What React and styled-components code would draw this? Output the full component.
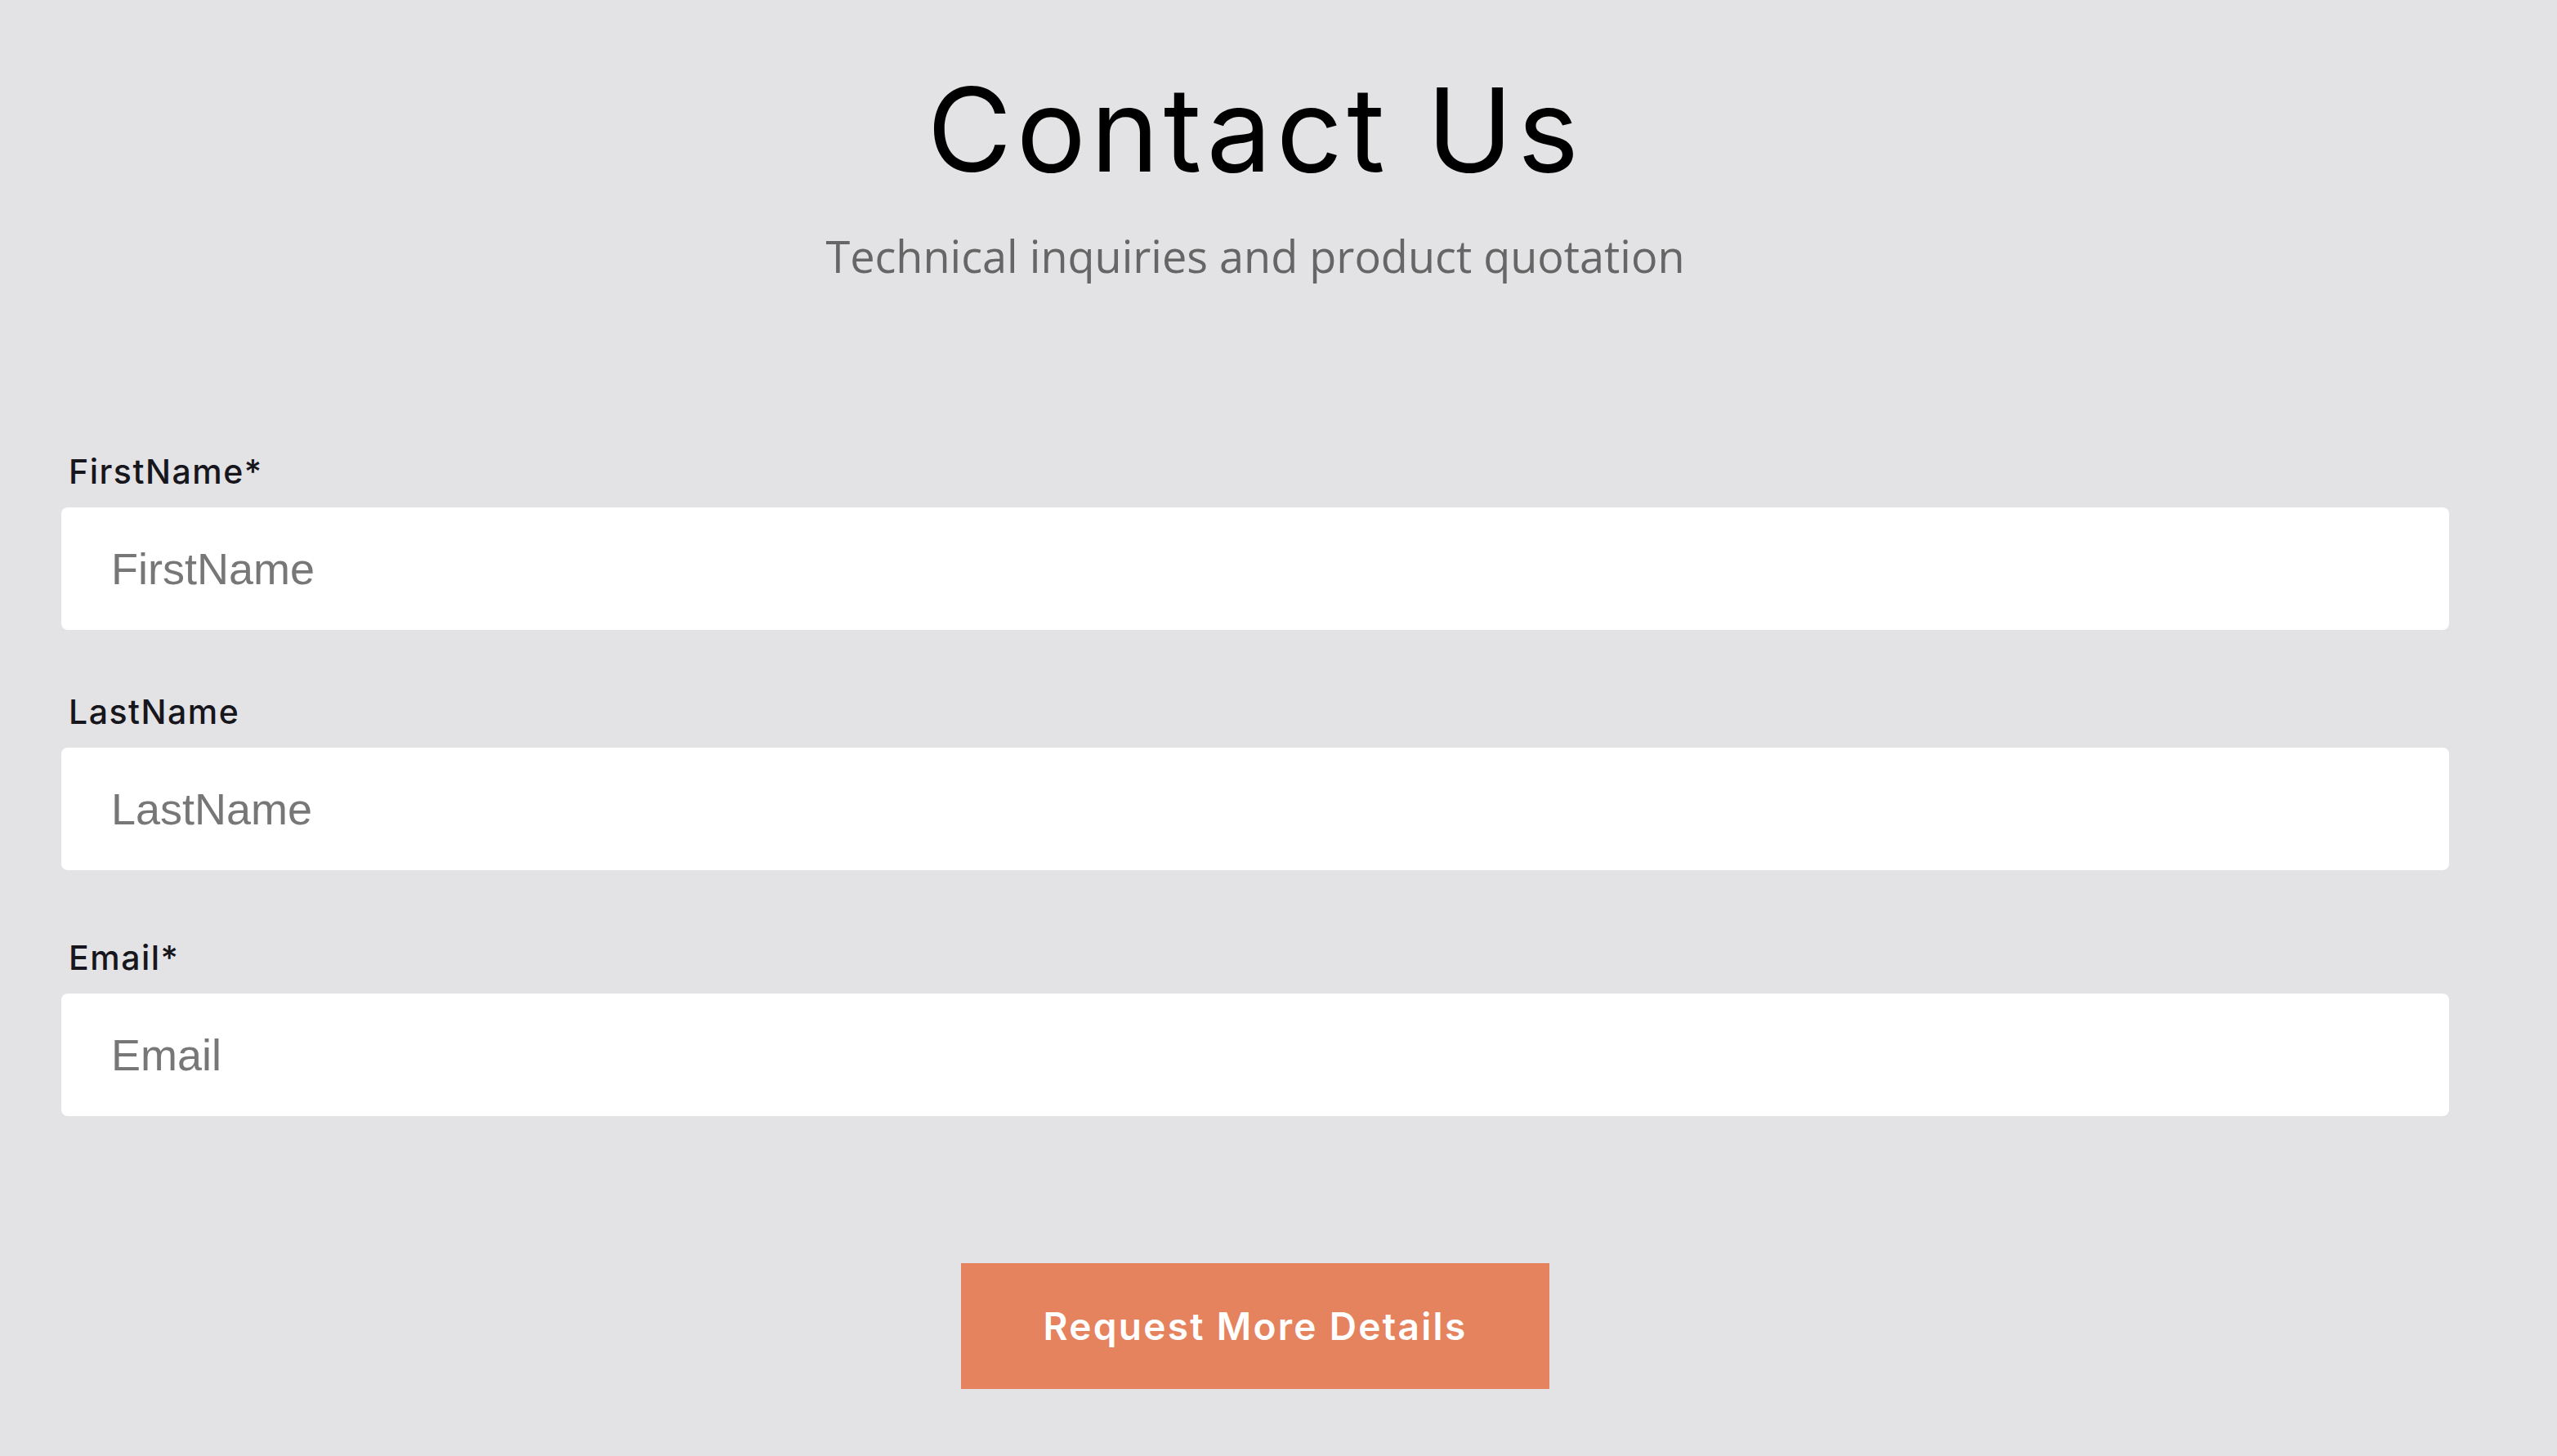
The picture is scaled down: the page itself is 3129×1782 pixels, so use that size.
import React from "react";
import styled, { createGlobalStyle } from "styled-components";

const Global = createGlobalStyle`
  html, body {
    margin: 0;
    padding: 0;
    background: #e3e3e5;
  }
  * {
    box-sizing: border-box;
  }
`;

const Page = styled.main`
  width: 3072px;
  min-height: 1782px;
  padding: 0 75px;
  background: #e3e3e5;
`;

const Header = styled.header`
  display: flex;
  flex-direction: column;
  align-items: center;
  padding-top: 78px;
`;

const Title = styled.h1`
  margin: 0;
  font-family: Inter, "Liberation Sans", sans-serif;
  font-weight: 400;
  font-size: 142px;
  line-height: 160px;
  letter-spacing: 5.5px;
  color: #000;
`;

const Subtitle = styled.p`
  margin: 48px 0 0;
  font-family: "Open Sans", sans-serif;
  font-size: 54px;
  line-height: 1;
  color: #666;
`;

const Form = styled.form`
  display: flex;
  flex-direction: column;
  margin-top: 215px;
`;

const Field = styled.div`
  display: flex;
  flex-direction: column;
  margin-bottom: ${(p) => p.$gap}px;
`;

const Label = styled.label`
  padding-left: 9px;
  margin-bottom: 22px;
  font-family: Inter, "Liberation Sans", sans-serif;
  font-weight: 500;
  font-size: 41px;
  line-height: 44px;
  letter-spacing: 1.5px;
  color: #16161c;
`;

const Input = styled.input`
  width: 100%;
  height: 150px;
  border: none;
  border-radius: 8px;
  background: #fff;
  padding: 0 0 0 61px;
  font-family: "Liberation Sans", Arial, sans-serif;
  font-size: 54px;
  color: #333;
  outline: none;
  &::placeholder {
    color: #777;
  }
`;

const Actions = styled.div`
  display: flex;
  justify-content: center;
  margin-top: 90px;
`;

const Button = styled.button`
  width: 720px;
  height: 154px;
  border: none;
  border-radius: 0;
  background: #e5835f;
  color: #fff;
  font-family: Inter, "Liberation Sans", sans-serif;
  font-weight: 600;
  font-size: 46px;
  letter-spacing: 2.3px;
  cursor: pointer;
`;

const fields = [
  { id: "firstname", label: "FirstName*", placeholder: "FirstName", type: "text", gap: 78 },
  { id: "lastname", label: "LastName", placeholder: "LastName", type: "text", gap: 85 },
  { id: "email", label: "Email*", placeholder: "Email", type: "email", gap: 90 },
];

export default function App() {
  return (
    <>
      <Global />
      <Page>
        <Header>
          <Title>Contact Us</Title>
          <Subtitle>Technical inquiries and product quotation</Subtitle>
        </Header>
        <Form onSubmit={(e) => e.preventDefault()}>
          {fields.map((f) => (
            <Field key={f.id} $gap={f.gap}>
              <Label htmlFor={f.id}>{f.label}</Label>
              <Input id={f.id} type={f.type} placeholder={f.placeholder} />
            </Field>
          ))}
          <Actions>
            <Button type="submit">Request More Details</Button>
          </Actions>
        </Form>
      </Page>
    </>
  );
}
